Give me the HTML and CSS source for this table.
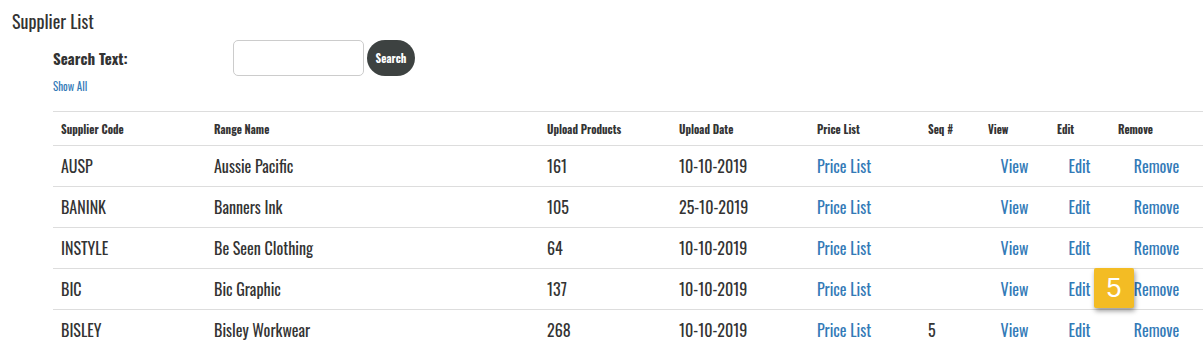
FILE: index.html
```html
<!DOCTYPE html>
<html lang="en">
<head>
  <meta charset="UTF-8">
  <title>Supplier List</title>
  <link rel="stylesheet" href="styles.css">
</head>
<body>

  <div class="page">
    <h1>Supplier List</h1>

    <div class="search-area">
      <div class="search-row">
        <label class="search-label" for="search-text">Search Text:</label>
        <input type="text" id="search-text" class="search-input">
        <button class="search-btn">Search</button>
      </div>
      <a href="#" class="show-all">Show All</a>

      <table class="supplier-table">
        <thead>
          <tr>
            <th class="col-code">Supplier Code</th>
            <th class="col-range">Range Name</th>
            <th class="col-upload">Upload Products</th>
            <th class="col-date">Upload Date</th>
            <th class="col-price">Price List</th>
            <th class="col-seq">Seq #</th>
            <th class="col-view">View</th>
            <th class="col-edit">Edit</th>
            <th class="col-remove">Remove</th>
          </tr>
        </thead>
        <tbody>
          <tr>
            <td>AUSP</td>
            <td>Aussie Pacific</td>
            <td>161</td>
            <td>10-10-2019</td>
            <td><a href="#">Price List</a></td>
            <td></td>
            <td class="center"><a href="#">View</a></td>
            <td class="center"><a href="#">Edit</a></td>
            <td class="center"><a href="#">Remove</a></td>
          </tr>
          <tr>
            <td>BANINK</td>
            <td>Banners Ink</td>
            <td>105</td>
            <td>25-10-2019</td>
            <td><a href="#">Price List</a></td>
            <td></td>
            <td class="center"><a href="#">View</a></td>
            <td class="center"><a href="#">Edit</a></td>
            <td class="center"><a href="#">Remove</a></td>
          </tr>
          <tr>
            <td>INSTYLE</td>
            <td>Be Seen Clothing</td>
            <td>64</td>
            <td>10-10-2019</td>
            <td><a href="#">Price List</a></td>
            <td></td>
            <td class="center"><a href="#">View</a></td>
            <td class="center"><a href="#">Edit</a></td>
            <td class="center"><a href="#">Remove</a></td>
          </tr>
          <tr>
            <td>BIC</td>
            <td>Bic Graphic</td>
            <td>137</td>
            <td>10-10-2019</td>
            <td><a href="#">Price List</a></td>
            <td></td>
            <td class="center"><a href="#">View</a></td>
            <td class="center edit-cell"><a href="#">Edit</a><span class="step-badge">5</span></td>
            <td class="center"><a href="#">Remove</a></td>
          </tr>
          <tr>
            <td>BISLEY</td>
            <td>Bisley Workwear</td>
            <td>268</td>
            <td>10-10-2019</td>
            <td><a href="#">Price List</a></td>
            <td>5</td>
            <td class="center"><a href="#">View</a></td>
            <td class="center"><a href="#">Edit</a></td>
            <td class="center"><a href="#">Remove</a></td>
          </tr>
        </tbody>
      </table>
    </div>
  </div>

</body>
</html>
```

FILE: styles.css
```css
* {
  box-sizing: border-box;
}

body {
  font-family: 'Oswald', 'Liberation Sans Narrow', 'DejaVu Sans Condensed', 'Roboto Condensed', sans-serif;
  font-stretch: condensed;
  background: #fff;
  color: #333;
  margin: 0;
  padding: 0;
  overflow: hidden;
}

a {
  color: #337ab7;
  text-decoration: none;
}

.page {
  padding: 10px 0 0 12px;
}

h1 {
  font-size: 18px;
  font-weight: normal;
  margin: 0;
  line-height: 22px;
}

.search-area {
  margin-left: 41px;
}

.search-row {
  display: flex;
  align-items: center;
  margin-top: 8px;
}

.search-label {
  font-size: 15px;
  font-weight: bold;
  width: 180px;
}

.search-input {
  width: 131px;
  height: 36px;
  border: 1px solid #ccc;
  border-radius: 5px;
  margin: 0;
}

.search-btn {
  height: 36px;
  width: 48px;
  margin-left: 3px;
  border: none;
  border-radius: 18px;
  background: #3d4241;
  color: #fff;
  font-family: inherit;
  font-size: 11px;
  font-weight: bold;
  padding: 0;
  cursor: pointer;
}

.show-all {
  display: block;
  font-size: 11px;
  margin-top: 2px;
  line-height: 16px;
}

.supplier-table {
  width: 1150px;
  margin-top: 17px;
  border-collapse: collapse;
  border-top: 1px solid #ddd;
}

.supplier-table th {
  font-size: 11px;
  font-weight: bold;
  text-align: left;
  padding: 0 8px;
  height: 34px;
  border-bottom: 1px solid #ddd;
}

.supplier-table td {
  font-size: 16px;
  padding: 0 8px;
  height: 41px;
  border-bottom: 1px solid #ddd;
}

.supplier-table .center {
  text-align: center;
}

.col-code { width: 153px; }
.col-range { width: 333px; }
.col-upload { width: 132px; }
.col-date { width: 138px; }
.col-price { width: 111px; }
.col-seq { width: 60px; }
.col-view { width: 69px; }
.col-edit { width: 61px; }
.col-remove { width: 93px; }

.edit-cell {
  position: relative;
}

/* Step marker */
.step-badge {
  position: absolute;
  left: 45px;
  top: -1px;
  width: 40px;
  height: 40px;
  background: #f3bc24;
  color: #fff;
  font-family: 'Liberation Sans', Arial, sans-serif;
  font-size: 27px;
  line-height: 40px;
  text-align: center;
  border-radius: 2px;
  box-shadow: 1px 3px 5px rgba(0, 0, 0, 0.4);
}
```
